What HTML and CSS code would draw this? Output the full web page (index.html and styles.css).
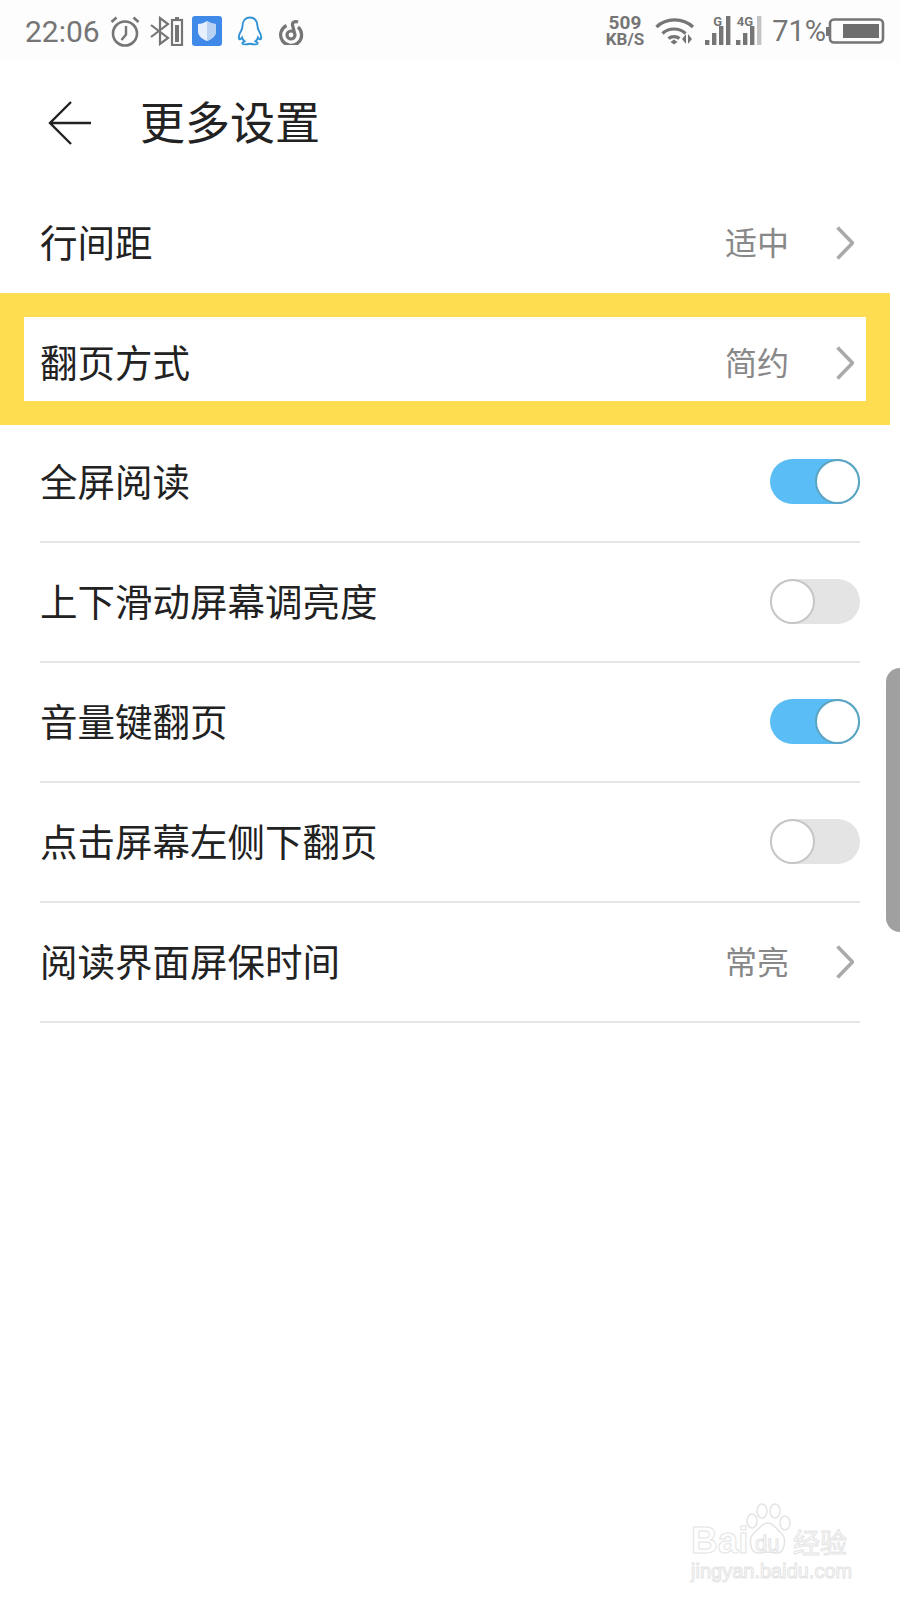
FILE: index.html
```html
<!DOCTYPE html>
<html lang="zh">
<head>
    <meta charset="UTF-8">
    <meta name="viewport" content="width=device-width, initial-scale=1.0">
    <title>更多设置</title>
    <link rel="stylesheet" href="styles.css">
</head>
<body>
    <div class="status-bar">
        <div class="status-left">
            <span class="time">22:06</span>
            <svg class="ic-alarm" width="30" height="32" viewBox="0 0 30 32" fill="none" stroke="#757575" stroke-width="2.6">
                <circle cx="15" cy="18.500" r="12"/>
                <path d="M16 11v8.500l-4.500 5.500" stroke-width="2.4"/>
                <path d="M1.500 7l5-4.500M28.500 7l-5-4.500"/>
            </svg>
            <svg class="ic-bt" width="34" height="30" viewBox="0 0 34 30" fill="none" stroke="#757575" stroke-width="2.2">
                <path d="M1 9l17 13-8 6V2l8 6L1 21"/>
                <rect x="22" y="4" width="10" height="25"/>
                <rect x="25" y="1" width="4" height="3" fill="#757575" stroke="none"/>
                <rect x="25" y="9" width="4" height="17" fill="#757575" stroke="none"/>
            </svg>
            <svg class="ic-shield" width="30" height="30" viewBox="0 0 30 30">
                <rect width="30" height="30" rx="3" fill="#3f8ae8"/>
                <path d="M15 5c3 2 6 3 9 3v7c0 5-4 8-9 10-5-2-9-5-9-10V8c3 0 6-1 9-3z" fill="#e6effb"/>
                <path d="M15 5c3 2 6 3 9 3v7c0 5-4 8-9 10z" fill="#b9d2f3"/>
            </svg>
            <svg class="ic-qq" width="26" height="30" viewBox="0 0 26 30" fill="none" stroke="#2e92d6" stroke-width="1.9">
                <path d="M13 1.500c-5 0-7.500 4-7.500 8.500 0 2-.4 3-1.500 5-1.500 2.500-2.500 5-2 7.500.3 1.500 1.500 1 3-1 .5 2 1.500 3 2.500 3.800-1.500.7-2.500 1.300-2 2.300.5 1 4 1 6 .4 1-.3 2-.3 3 0 2 .6 5.500.6 6-.4.5-1-.5-1.600-2-2.300 1-.8 2-1.800 2.500-3.800 1.500 2 2.700 2.500 3 1 .5-2.500-.5-5-2-7.500-1.100-2-1.500-3-1.500-5 0-4.500-2.500-8.500-7.500-8.500z"/>
            </svg>
            <svg class="ic-cloud" width="26" height="28" viewBox="0 0 26 28" fill="none" stroke="#757575" stroke-width="3.2">
                <path d="M8.500 8.500A10.500 10.500 0 1 0 20 10"/>
                <path d="M17 18c0-2.500-2-4-4-4s-4 1.800-4 4 2 4 4 4 4-1.800 4-4l-2.500-10c-.5-2 2-4.500 5.500-3"/>
            </svg>
        </div>
        <div class="status-right">
            <div class="speed"><span>509</span><span>KB/S</span></div>
            <svg class="ic-wifi" width="40" height="28" viewBox="0 0 40 28" fill="none" stroke="#757575" stroke-width="3.2">
                <path d="M1.500 10C11 .5 28 .5 38 10"/>
                <path d="M7.500 16.500c6-6 17-6 23 0"/>
                <path d="M13.500 21.500c3-2.500 8-2.500 11 0"/>
                <path d="M15.500 25l3.500-2.500 3.500 2.500-3.500 2.500z" fill="#757575" stroke="none"/>
                <path d="M31 17v10l-4-5zM33 17v10l4-5z" fill="#757575" stroke="none"/>
            </svg>
            <div class="signal">
                <span class="sig-label">G</span>
                <svg width="26" height="30" viewBox="0 0 26 30" fill="#757575">
                    <rect x="0" y="24" width="4.4" height="5"/>
                    <rect x="7" y="17" width="4.4" height="12"/>
                    <rect x="14" y="10" width="4.4" height="19"/>
                    <rect x="21" y="0" width="4.4" height="29"/>
                </svg>
            </div>
            <div class="signal signal-4g">
                <span class="sig-label">4G</span>
                <svg width="26" height="30" viewBox="0 0 26 30" fill="#757575">
                    <rect x="0" y="24" width="4.4" height="5"/>
                    <rect x="7" y="17" width="4.4" height="12"/>
                    <rect x="14" y="10" width="4.4" height="19"/>
                    <rect x="21" y="0" width="4.4" height="29" fill="#c4c4c4"/>
                </svg>
            </div>
            <span class="battery-text">71%</span>
            <svg class="ic-battery" width="59" height="26" viewBox="0 0 59 26" fill="none">
                <rect x="0" y="9" width="3" height="9" fill="#757575"/>
                <rect x="4" y="1.500" width="53" height="23" rx="4" stroke="#757575" stroke-width="2.6"/>
                <rect x="17" y="6" width="36" height="14" fill="#6e6e6e"/>
            </svg>
        </div>
    </div>

    <div class="header">
        <svg class="back" width="44" height="44" viewBox="0 0 44 44" fill="none" stroke="#222" stroke-width="2.4">
            <path d="M43 22H2M23 1L2 22l21 21"/>
        </svg>
        <h1>更多设置</h1>
    </div>

    <div class="list">
        <div class="row plain">
            <span class="label">行间距</span>
            <span class="value">适中</span>
            <svg class="chevron" width="18" height="34" viewBox="0 0 18 34" fill="none" stroke="#aaa" stroke-width="3.6"><path d="M1.500 1.500L16.500 17 1.500 32.500"/></svg>
        </div>
        <div class="row plain marked">
            <span class="label">翻页方式</span>
            <span class="value">简约</span>
            <svg class="chevron" width="18" height="34" viewBox="0 0 18 34" fill="none" stroke="#aaa" stroke-width="3.6"><path d="M1.500 1.500L16.500 17 1.500 32.500"/></svg>
            <div class="mark"></div>
        </div>
        <div class="row">
            <span class="label">全屏阅读</span>
            <span class="switch on"><i></i></span>
        </div>
        <div class="row">
            <span class="label">上下滑动屏幕调亮度</span>
            <span class="switch"><i></i></span>
        </div>
        <div class="row">
            <span class="label">音量键翻页</span>
            <span class="switch on"><i></i></span>
        </div>
        <div class="row">
            <span class="label">点击屏幕左侧下翻页</span>
            <span class="switch"><i></i></span>
        </div>
        <div class="row">
            <span class="label">阅读界面屏保时间</span>
            <span class="value">常亮</span>
            <svg class="chevron" width="18" height="34" viewBox="0 0 18 34" fill="none" stroke="#aaa" stroke-width="3.6"><path d="M1.500 1.500L16.500 17 1.500 32.500"/></svg>
        </div>
    </div>

    <div class="side-handle"></div>

    <div class="watermark">
        <span class="wm-bai">Bai</span>
        <svg class="wm-paw" width="45" height="52" viewBox="0 0 45 52" fill="#fff" stroke="#e4e4e4" stroke-width="1.5">
            <ellipse cx="6" cy="18" rx="5" ry="7"/>
            <ellipse cx="16" cy="8" rx="5" ry="7"/>
            <ellipse cx="29" cy="8" rx="5" ry="7"/>
            <ellipse cx="39" cy="20" rx="5" ry="7"/>
            <path d="M22 20c6 0 8 6 13 10 6 5 4 20-4 20-3 0-6-1-9-1s-6 1-10 1c-8 0-10-15-4-20 5-4 8-10 14-10z"/>
        </svg>
        <span class="wm-du">du</span>
        <span class="wm-cn">经验</span>
        <span class="wm-url">jingyan.baidu.com</span>
    </div>
</body>
</html>
```

FILE: styles.css
```css
body {
    font-family: "Noto Sans CJK SC", "Liberation Sans", sans-serif;
    background-color: #fff;
    margin: 0;
    width: 900px;
    height: 1600px;
    position: relative;
    overflow: hidden;
    color: #222;
}
.status-bar {
    height: 62px;
    background-color: #fdfdfd;
    display: flex;
    justify-content: space-between;
    align-items: center;
    color: #757575;
    font-family: Roboto, sans-serif;
}
.status-left, .status-right {
    display: flex;
    align-items: center;
}
.status-left {
    padding-left: 25px;
}
.status-right {
    padding-right: 15px;
}
.time {
    font-size: 30px;
    width: 85px;
}
.ic-bt {
    margin-left: 10px;
}
.ic-shield {
    margin-left: 8px;
}
.ic-qq {
    margin-left: 15px;
}
.ic-cloud {
    margin-left: 15px;
}
.speed {
    display: flex;
    flex-direction: column;
    align-items: center;
    font-weight: 700;
    line-height: 16px;
    font-size: 19px;
    margin-right: 2px;
}
.speed span:last-child {
    font-size: 17px;
}
.ic-wifi {
    margin-left: 9px;
}
.signal {
    position: relative;
    margin-left: 10px;
    height: 30px;
}
.signal-4g {
    margin-left: 5px;
}
.sig-label {
    position: absolute;
    top: -1px;
    right: 9px;
    font-size: 13px;
    line-height: 13px;
    font-weight: 700;
}
.battery-text {
    font-size: 29px;
    margin-left: 10px;
}
.header {
    height: 121px;
    display: flex;
    align-items: center;
    padding-left: 48px;
}
.header h1 {
    margin: 0 0 4px 48px;
    font-size: 45px;
    font-weight: 400;
}
.list {
    padding: 0 40px;
}
.row {
    height: 120px;
    box-sizing: border-box;
    display: flex;
    align-items: center;
    border-bottom: 2px solid #e6e6e6;
}
.row.plain {
    border-bottom: none;
}
.label {
    font-size: 37.5px;
    flex: 1;
    margin-bottom: 6px;
}
.value {
    font-size: 32px;
    color: #888;
    margin: 0 47px 4px 0;
}
.chevron {
    margin-right: 6px;
}
.marked {
    position: relative;
}
.mark {
    position: absolute;
    left: -40px;
    top: -10px;
    width: 890px;
    height: 132px;
    box-sizing: border-box;
    border: 24px solid #fedd50;
}
.switch {
    width: 90px;
    height: 45px;
    margin-bottom: 2px;
    border-radius: 23px;
    background-color: #e4e4e4;
    display: flex;
    justify-content: flex-start;
}
.switch.on {
    background-color: #5bbdf5;
    justify-content: flex-end;
}
.switch i {
    width: 45px;
    height: 45px;
    box-sizing: border-box;
    border-radius: 50%;
    background-color: #fff;
    border: 2px solid #c6c6c6;
}
.switch.on i {
    border-color: #5ba4c2;
}
.side-handle {
    position: absolute;
    right: 0;
    top: 668px;
    width: 14px;
    height: 264px;
    background-color: #a0a0a0;
    border-radius: 14px 0 0 14px;
}
.watermark {
    position: absolute;
    left: 690px;
    top: 1500px;
    width: 170px;
    height: 90px;
    color: #fff;
    font-family: "Liberation Sans", sans-serif;
    -webkit-text-stroke: 1px #e4e4e4;
}
.watermark span {
    position: absolute;
}
.wm-bai {
    left: 1px;
    top: 21px;
    font-size: 37px;
    line-height: 40px;
    font-weight: 700;
}
.wm-paw {
    position: absolute;
    left: 56px;
    top: 3px;
}
.wm-du {
    left: 65px;
    top: 32px;
    font-size: 22px;
    line-height: 24px;
}
.wm-cn {
    left: 103px;
    top: 24px;
    font-size: 27px;
    line-height: 36px;
    font-family: "Noto Sans CJK SC", sans-serif;
}
.wm-url {
    left: 1px;
    top: 59px;
    font-size: 20px;
    line-height: 24px;
}
```
